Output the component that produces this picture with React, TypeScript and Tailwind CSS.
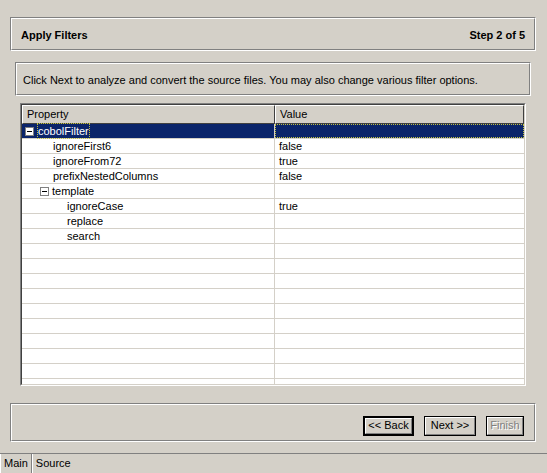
import React from "react";

type Row = { name: string; value: string; level: number; toggle?: boolean };

const rows: Row[] = [
  { name: "cobolFilter", value: "", level: 0, toggle: true },
  { name: "ignoreFirst6", value: "false", level: 1 },
  { name: "ignoreFrom72", value: "true", level: 1 },
  { name: "prefixNestedColumns", value: "false", level: 1 },
  { name: "template", value: "", level: 1, toggle: true },
  { name: "ignoreCase", value: "true", level: 2 },
  { name: "replace", value: "", level: 2 },
  { name: "search", value: "", level: 2 },
];

const Etched = ({ className, children }: { className: string; children?: React.ReactNode }) => (
  <div className={`border border-t-[#808080] border-l-[#808080] border-r-white border-b-white ${className}`}>
    <div className="h-full border border-t-white border-l-white border-r-[#808080] border-b-[#808080]">
      {children}
    </div>
  </div>
);

const MinusBox = () => (
  <span className="w-[9px] h-[9px] border border-[#808080] bg-white flex items-center justify-center shrink-0">
    <span className="w-[5px] h-px bg-black" />
  </span>
);

const Btn = ({ label, w, isDefault, disabled }: { label: string; w: string; isDefault?: boolean; disabled?: boolean }) => (
  <div className={`h-[20px] ${w} ${isDefault ? "border-2 border-black" : "border border-black"}`}>
    <div className="h-full border border-t-white border-l-white border-r-[#808080] border-b-[#808080] flex items-center justify-center">
      <span className={disabled ? "text-[#808080] [text-shadow:1px_1px_0_#fff]" : "text-black"}>{label}</span>
    </div>
  </div>
);

export default function App() {
  const emptyRows = Array(12).fill(0);
  return (
    <div className="w-[547px] h-[473px] bg-[#d4d0c8] flex flex-col overflow-hidden text-[11px] text-black [font-family:'Liberation_Sans',Arial,sans-serif]">
      <Etched className="mt-[17px] ml-[10px] mr-[11px] h-[34px]">
        <div className="flex items-center justify-between h-full px-[9px] font-bold pt-[2px]">
          <span>Apply Filters</span>
          <span>Step 2 of 5</span>
        </div>
      </Etched>

      <Etched className="mt-[11px] ml-[15px] mr-[16px] h-[34px]">
        <div className="flex items-center h-full px-[6px] pt-[2px]">
          Click Next to analyze and convert the source files. You may also change various filter options.
        </div>
      </Etched>

      <div className="mt-[7px] ml-[20px] mr-[21px] h-[283px] border border-t-[#808080] border-l-[#808080] border-r-white border-b-white">
        <div className="h-full border border-t-[#404040] border-l-[#404040] border-r-[#d4d0c8] border-b-[#d4d0c8] bg-white overflow-hidden">
          <div className="flex h-[19px] bg-[#d4d0c8]">
            <div className="w-[253px] border border-t-white border-l-white border-r-[#404040] border-b-[#404040] flex items-center px-[4px]">
              Property
            </div>
            <div className="flex-1 border border-t-white border-l-white border-r-[#404040] border-b-[#404040] flex items-center px-[4px]">
              Value
            </div>
          </div>
          {rows.map((r, i) => {
            const sel = i === 0;
            return (
              <div key={r.name} className={`flex h-[15px] border-b border-[#d4d0c8] ${sel ? "bg-[#0a246a] text-white" : ""}`}>
                <div
                  className="w-[253px] border-r border-[#d4d0c8] flex items-center gap-[3px]"
                  style={{ paddingLeft: r.toggle ? 3 + r.level * 15 : 31 + (r.level - 1) * 14 }}
                >
                  {r.toggle && <MinusBox />}
                  <span className={sel ? "outline outline-1 outline-dotted outline-[#c0c040] -outline-offset-1 px-px" : ""}>
                    {r.name}
                  </span>
                </div>
                <div className={`flex-1 flex items-center px-[4px] ${sel ? "border border-dotted border-[#c0c040]" : ""}`}>
                  {r.value}
                </div>
              </div>
            );
          })}
          {emptyRows.map((_, i) => (
            <div key={i} className="flex h-[15px] border-b border-[#d4d0c8]">
              <div className="w-[253px] border-r border-[#d4d0c8]" />
              <div className="flex-1" />
            </div>
          ))}
        </div>
      </div>

      <Etched className="mt-[17px] ml-[10px] mr-[11px] h-[39px]">
        <div className="flex items-center justify-end h-full gap-[10px] pr-[10px] pt-[6px]">
          <Btn label="<< Back" w="w-[51px]" isDefault />
          <Btn label="Next >>" w="w-[52px]" />
          <Btn label="Finish" w="w-[38px]" disabled />
        </div>
      </Etched>

      <div className="mt-[11px] border-t border-t-[#808080] flex h-[20px]">
        <div className="px-[3px] flex items-center border-r border-r-[#808080] border-l border-l-white bg-[#d4d0c8]">Main</div>
        <div className="px-[3px] flex items-center border-l border-l-white">Source</div>
      </div>
    </div>
  );
}
